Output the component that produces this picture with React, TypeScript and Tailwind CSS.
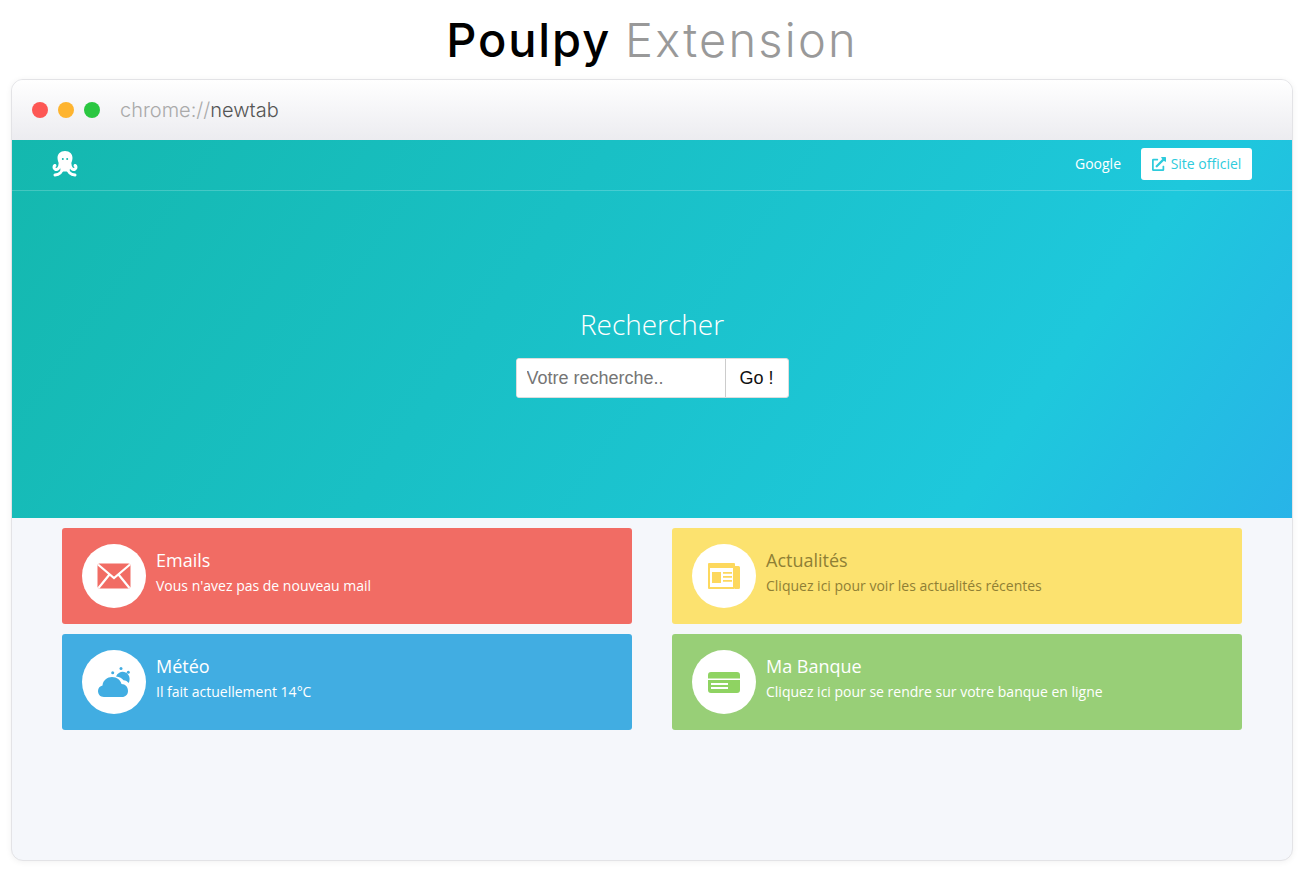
import { FaExternalLinkAlt } from "react-icons/fa"
import type { ReactNode } from "react"

function MailIcon() {
  return (
    <svg viewBox="0 0 34 26" className="h-[26px] w-[34px]" aria-hidden="true">
      <rect x="0.500" y="0.500" width="33" height="25" rx="2" fill="#f16c64" />
      <path d="M1 1.500 17 15 33 1.500M1.500 25 12.500 11.500M32.500 25 21.500 11.500" fill="none" stroke="#fff" strokeWidth="2.200" />
    </svg>
  )
}

function NewsIcon() {
  return (
    <svg viewBox="0 0 32 26" className="h-[26px] w-[32px]" aria-hidden="true">
      <path fill="#fdd85d" fillRule="evenodd" d="M1 0h25a1 1 0 0 1 1 1v24a1 1 0 0 1-1 1H1a1 1 0 0 1-1-1V1a1 1 0 0 1 1-1zm1 5v19h23V5z" />
      <path fill="#fdd85d" d="M4 9h9v11H4zM15 9h9v1.800h-9zM15 13h9v1.800h-9zM15 17h9v1.800h-9zM27 3h3.500A1.500 1.500 0 0 1 32 4.500V24.500a1.500 1.500 0 0 1-1.500 1.500H27z" />
    </svg>
  )
}

function CloudIcon() {
  return (
    <svg viewBox="0 0 32 30" className="h-[30px] w-[32px]" aria-hidden="true">
      <path fill="#41ade2" d="M6 30C2 30 0 27 0 24c0-3 2-5 4.500-5.500C5 13 9.500 10 14 10c5 0 8.500 3 9.500 7 4 0 6.500 3 6.500 7 0 3.500-2.500 6-6 6z" />
      <path fill="#41ade2" d="M18 9.500A7 7 0 0 1 31.500 13c0 1-.3 2-.8 3-1.300-1.500-3-2.500-5.200-2.700C24.300 11.300 21.500 9.800 18 9.500z" />
      <circle cx="14.700" cy="5.700" r="1.500" fill="#41ade2" />
      <circle cx="23" cy="1.500" r="1.500" fill="#41ade2" />
      <circle cx="30.300" cy="5.300" r="1.500" fill="#41ade2" />
    </svg>
  )
}

function CardIcon() {
  return (
    <svg viewBox="0 0 32 21" className="h-[21px] w-[32px]" aria-hidden="true">
      <path fill="#8fd362" fillRule="evenodd" d="M3 0h26a3 3 0 0 1 3 3v3.500H0V3a3 3 0 0 1 3-3zM0 8h32v10a3 3 0 0 1-3 3H3a3 3 0 0 1-3-3zm3 3v2h17v-2zm0 4v2h17v-2z" />
    </svg>
  )
}

function OctopusIcon() {
  return (
    <svg viewBox="0 0 26 26" className="size-[26px]" aria-hidden="true">
      <path fill="#fff" d="M13 0c4.800 0 7.500 3 7.500 7 0 3-1.500 5-2 7.500 0 2-.5 4-1.500 6H9C8.500 18.500 8 16.500 7.500 14.500 7 12 5.500 10 5.500 7c0-4 2.700-7 7.500-7z" />
      <path d="M8 13c0 4-3 6.500-5 5C1.500 16.800 1.800 15 3 14.500M18 13c0 4 3 6.500 5 5 1.500-1.200 1.200-3 0-3.500M10.500 17c0 4-3.500 6.500-7.500 7M15.500 17c0 4 3.500 6.500 7.500 7" fill="none" stroke="#fff" strokeWidth="3" strokeLinecap="round" />
      <circle cx="10.800" cy="8" r="1" fill="#14b8ae" />
      <circle cx="15.200" cy="8" r="1" fill="#14b8ae" />
    </svg>
  )
}

type TileProps = {
  title: string
  text: string
  bg: string
  fg: string
  icon: ReactNode
}

function Tile({ title, text, bg, fg, icon }: TileProps) {
  return (
    <div className={`flex h-24 items-center gap-[10px] rounded-[3px] px-5 ${bg} ${fg}`}>
      <div className="flex size-16 shrink-0 items-center justify-center rounded-full bg-white">
        {icon}
      </div>
      <div className="flex flex-col pb-[6px]">
        <span className="text-lg leading-[23px]">{title}</span>
        <span className="mt-[2px] text-sm leading-[24px]">{text}</span>
      </div>
    </div>
  )
}

export default function App() {
  return (
    <div className="flex h-[874px] w-full flex-col overflow-hidden bg-white font-['Open_Sans',sans-serif]">
      <h1 className="flex h-[79px] items-center justify-center font-['Inter',sans-serif] text-[47px] leading-none">
        <span className="font-medium tracking-[1.900px] text-black">Poulpy</span>
        <span className="ml-[14px] font-light tracking-[2.200px] text-[#999]">Extension</span>
      </h1>

      <div className="mx-[11px] flex h-[782px] flex-col overflow-hidden rounded-xl border border-[#e3e3e6] bg-[#f5f7fb] shadow-[0_1px_6px_rgba(0,0,0,0.06)]">
        <div className="flex h-[60px] shrink-0 items-center bg-gradient-to-b from-white to-[#ececf0] pl-5">
          <span className="size-4 rounded-full bg-[#fd5754]" />
          <span className="ml-[10px] size-4 rounded-full bg-[#feb42f]" />
          <span className="ml-[10px] size-4 rounded-full bg-[#2ac741]" />
          <span className="ml-[20px] font-['Inter',sans-serif] text-xl font-light text-[#aaa]">
            chrome://<span className="text-[#555]">newtab</span>
          </span>
        </div>

        <div className="flex h-[378px] shrink-0 flex-col bg-[linear-gradient(125deg,#14b8ae_0%,#1ec8dc_78%,#28b4e8_100%)]">
          <nav className="flex h-[51px] shrink-0 items-center justify-between border-b border-white/20 px-10 pb-[2px]">
            <OctopusIcon />
            <div className="flex items-center gap-5">
              <span className="text-sm text-white">Google</span>
              <span className="flex h-8 w-[111px] items-center justify-center gap-[5px] rounded-[3px] bg-white text-sm text-[#2ecbdc]">
                <FaExternalLinkAlt className="size-[14px]" />
                Site officiel
              </span>
            </div>
          </nav>

          <div className="flex flex-1 flex-col items-center pt-[113px]">
            <h2 className="text-[28px] leading-10 font-light text-white">Rechercher</h2>
            <div className="mt-[14px] flex h-10 w-[273px] overflow-hidden rounded-[3px] border border-[#ddd] bg-white font-['Liberation_Sans',sans-serif] text-lg">
              <input
                placeholder="Votre recherche.."
                className="w-[208px] bg-white px-[10px] outline-none placeholder:text-[#757575]"
              />
              <button className="flex-1 border-l border-[#ccc] text-[#111]">Go !</button>
            </div>
          </div>
        </div>

        <div className="grid grid-cols-2 gap-x-10 gap-y-[10px] px-[50px] pt-[10px]">
          <Tile
            title="Emails"
            text="Vous n'avez pas de nouveau mail"
            bg="bg-[#f16c64]"
            fg="text-white"
            icon={<MailIcon />}
          />
          <Tile
            title="Actualités"
            text="Cliquez ici pour voir les actualités récentes"
            bg="bg-[#fce26f]"
            fg="text-[#8f7f35]"
            icon={<NewsIcon />}
          />
          <Tile
            title="Météo"
            text="Il fait actuellement 14°C"
            bg="bg-[#41ade2]"
            fg="text-white"
            icon={<CloudIcon />}
          />
          <Tile
            title="Ma Banque"
            text="Cliquez ici pour se rendre sur votre banque en ligne"
            bg="bg-[#98cf77]"
            fg="text-white"
            icon={<CardIcon />}
          />
        </div>
      </div>
    </div>
  )
}
